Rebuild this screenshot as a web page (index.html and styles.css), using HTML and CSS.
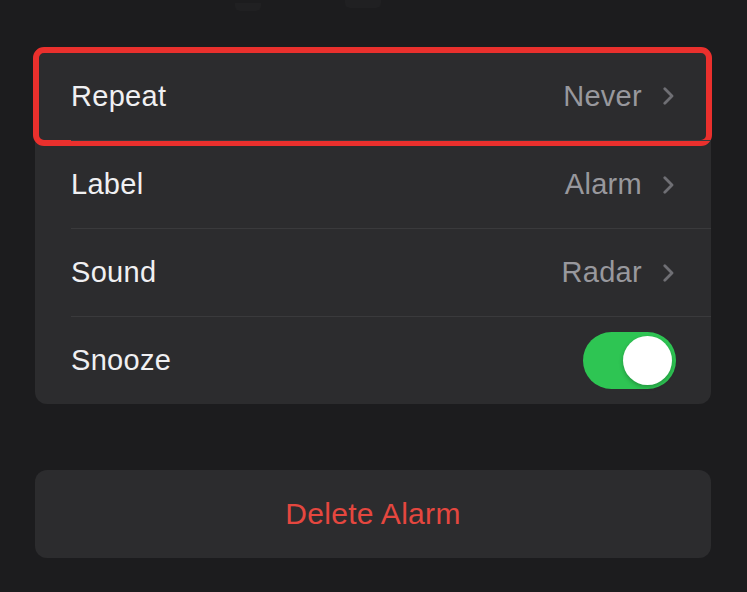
FILE: index.html
```html
<!DOCTYPE html>
<html lang="en">
<head>
<meta charset="utf-8">
<title>Edit Alarm</title>
<link rel="stylesheet" href="styles.css">
</head>
<body>
<div class="screen">
  <div class="picker-tail">
    <span class="picker-mark picker-mark-a"></span>
    <span class="picker-mark picker-mark-b"></span>
  </div>

  <div class="card">
    <div class="row row-highlighted">
      <div class="row-inner">
        <span class="row-label">Repeat</span>
        <span class="row-trail">
          <span class="row-value">Never</span>
          <svg class="chevron" viewBox="0 0 11 18" width="11" height="18"><path d="M1.8 1.8 L9 9 L1.8 16.2"/></svg>
        </span>
      </div>
      <div class="highlight"></div>
    </div>
    <div class="row">
      <div class="row-inner">
        <span class="row-label">Label</span>
        <span class="row-trail">
          <span class="row-value">Alarm</span>
          <svg class="chevron" viewBox="0 0 11 18" width="11" height="18"><path d="M1.8 1.8 L9 9 L1.8 16.2"/></svg>
        </span>
      </div>
    </div>
    <div class="row">
      <div class="row-inner">
        <span class="row-label">Sound</span>
        <span class="row-trail">
          <span class="row-value">Radar</span>
          <svg class="chevron" viewBox="0 0 11 18" width="11" height="18"><path d="M1.8 1.8 L9 9 L1.8 16.2"/></svg>
        </span>
      </div>
    </div>
    <div class="row">
      <div class="row-inner">
        <span class="row-label">Snooze</span>
        <span class="toggle toggle-on"><span class="knob"></span></span>
      </div>
    </div>
  </div>

  <div class="delete-btn">Delete Alarm</div>
</div>
</body>
</html>
```

FILE: styles.css
```css
html, body {
  margin: 0;
  padding: 0;
  background: #1c1c1e;
}

body {
  font-family: "Liberation Sans", Arial, sans-serif;
  color: #f2f2f4;
  width: 747px;
  height: 592px;
  overflow: hidden;
}

.screen {
  padding: 0 36px 0 35px;
}

.picker-tail {
  height: 52px;
  display: flex;
  align-items: flex-start;
  padding-left: 200px;
}

.picker-mark {
  display: block;
  height: 8px;
  border-radius: 0 0 5px 5px;
  background: #202022;
}

.picker-mark-a {
  width: 26px;
  margin-top: 3px;
}

.picker-mark-b {
  width: 36px;
  margin-left: 84px;
}

.card {
  background: #2c2c2e;
  border-radius: 12px;
}

.row {
  position: relative;
  padding-left: 36px;
}

.row-inner {
  height: 88px;
  box-sizing: border-box;
  display: flex;
  align-items: center;
  justify-content: space-between;
  padding-right: 37px;
  border-top: 1px solid #3a3a3c;
}

.row:first-child .row-inner {
  border-top: none;
}

.row-label {
  font-size: 29px;
  letter-spacing: 0.3px;
  color: #f0f0f2;
}

.row-trail {
  display: flex;
  align-items: center;
  gap: 21px;
}

.row-value {
  font-size: 29px;
  letter-spacing: 0.3px;
  color: #98989d;
}

.chevron {
  display: block;
}

.chevron path {
  fill: none;
  stroke: #6f6f74;
  stroke-width: 2.8;
  stroke-linecap: round;
  stroke-linejoin: round;
}

.highlight {
  position: absolute;
  top: -5px;
  left: -2px;
  right: -1px;
  bottom: -6px;
  border: 6px solid #ea302d;
  border-radius: 11px;
  pointer-events: none;
}

.toggle {
  width: 93px;
  height: 57px;
  border-radius: 29px;
  background: #2ec553;
  display: flex;
  align-items: center;
  justify-content: flex-end;
  padding: 0 4px;
  box-sizing: border-box;
  margin-right: -2px;
}

.knob {
  width: 49px;
  height: 49px;
  border-radius: 50%;
  background: #ffffff;
  box-shadow: 0 2px 4px rgba(0, 0, 0, 0.25);
}

.delete-btn {
  margin-top: 66px;
  height: 88px;
  border-radius: 12px;
  background: #2c2c2e;
  display: flex;
  align-items: center;
  justify-content: center;
  font-size: 30px;
  letter-spacing: 0.3px;
  color: #e5473f;
}
```
